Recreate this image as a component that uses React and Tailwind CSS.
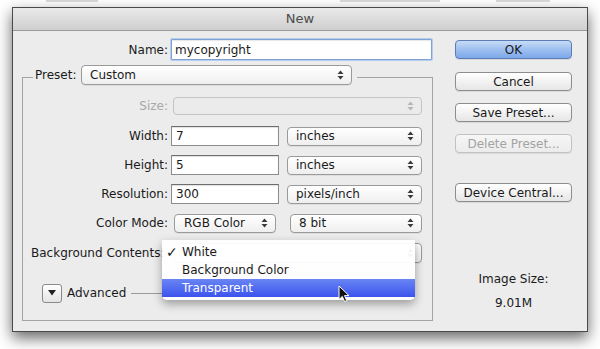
import React from "react";

const font = { fontFamily: '"DejaVu Sans", "Liberation Sans", sans-serif' };

function Arrows({ disabled }) {
  return (
    <svg width="7" height="10" viewBox="0 0 7 10" className="shrink-0">
      <polygon points="0.5,4 3.5,0.5 6.5,4" fill={disabled ? "#b5b5b5" : "#3a3a3a"} />
      <polygon points="0.5,6 3.5,9.5 6.5,6" fill={disabled ? "#b5b5b5" : "#3a3a3a"} />
    </svg>
  );
}

function Popup({ className, children, disabled, pl = "pl-[8px]" }) {
  return (
    <div
      className={`flex items-center justify-between rounded-[4px] border pr-[7px] ${pl} ${
        disabled
          ? "border-[#c4c4c4] bg-[#ebebeb]"
          : "border-[#9a9a9a] bg-linear-to-b from-white to-[#efefef] shadow-[0_1px_0_rgba(0,0,0,0.06)]"
      } ${className}`}
    >
      <span className="leading-none">{children}</span>
      <Arrows disabled={disabled} />
    </div>
  );
}

function Field({ value, className }) {
  return (
    <div
      className={`flex h-[20px] items-center border border-[#8c8c8c] border-t-[#6e6e6e] bg-white pl-[4px] shadow-[inset_0_1px_1px_rgba(0,0,0,0.12)] ${className}`}
    >
      {value}
    </div>
  );
}

function Row({ label, children, muted, className = "" }) {
  return (
    <div className={`flex h-[20px] items-center ${className}`}>
      <div className={`w-[145px] text-right ${muted ? "text-[#a8a8a8]" : ""}`}>{label}</div>
      {children}
    </div>
  );
}

function Button({ children, primary, disabled, className = "" }) {
  let look = "border-[#8d8d8d] bg-linear-to-b from-white to-[#e6e6e6] text-[#1a1a1a]";
  if (primary) look = "border-[#5a7db8] bg-linear-to-b from-[#c8dcf7] via-[#9dbff0] to-[#7ea8ea] text-[#1a1a1a]";
  if (disabled) look = "border-[#c2c2c2] bg-linear-to-b from-[#f6f6f6] to-[#ececec] text-[#a3a3a3]";
  return (
    <div
      className={`flex h-[19px] items-center justify-center rounded-[4px] border shadow-[0_1px_0_rgba(0,0,0,0.08)] ${look} ${className}`}
    >
      {children}
    </div>
  );
}

export default function App() {
  return (
    <div className="h-[349px] w-[600px] overflow-hidden bg-white text-[12px] text-[#1a1a1a]" style={font}>
      {/* bottoms of the document text behind the dialog */}
      <div className="flex h-[7px] items-start">
        <div className="ml-[46px] h-[2px] w-[52px] bg-[#d4d4d4]" />
        <div className="ml-[242px] h-[2px] w-[100px] bg-[#d4d4d4]" />
        <div className="ml-[56px] h-[2px] w-[54px] bg-[#d4d4d4]" />
      </div>

      <div className="ml-[12px] h-[325px] w-[576px] border border-[#4a4a4a] bg-[#ececec] shadow-[0_6px_14px_rgba(0,0,0,0.6)]">
        <div className="flex h-[23px] items-center justify-center border-b border-[#9b9b9b] bg-linear-to-b from-[#e9e9e9] to-[#cfcfcf] text-[13px] text-[#4b4b4b]">
          New
        </div>

        <div className="flex pl-[9px] pt-[8px]">
          {/* left column */}
          <div className="w-[411px]">
            <div className="flex h-[21px] items-center">
              <div className="w-[146px] text-right">Name:</div>
              <div className="ml-[3px] flex h-[21px] w-[261px] items-center rounded-[1px] border border-[#7fa2d6] bg-white pl-[3px] shadow-[0_0_0_1px_#b7cdee,inset_0_1px_1px_rgba(0,0,0,0.1)]">
                mycopyright
              </div>
            </div>

            <div className="mt-[17px] h-[244px] border border-[#a3a3a3]">
              <div className="-mt-[13px] flex h-[20px] items-center pl-[10px]">
                <div className="w-[48px] bg-[#ececec] pl-[2px]">Preset:</div>
                <Popup className="h-[20px] w-[271px]">Custom</Popup>
                <div className="h-[20px] w-[5px] bg-[#ececec]" />
              </div>

              <Row label="Size:" muted className="mt-[11px]">
                <Popup disabled className="ml-[5px] h-[18px] w-[249px]" />
              </Row>

              <Row label="Width:" className="mt-[10px]">
                <Field value="7" className="ml-[3px] w-[108px]" />
                <Popup className="ml-[8px] h-[19px] w-[135px]">inches</Popup>
              </Row>

              <Row label="Height:" className="mt-[9px]">
                <Field value="5" className="ml-[3px] w-[108px]" />
                <Popup className="ml-[8px] h-[19px] w-[135px]">inches</Popup>
              </Row>

              <Row label="Resolution:" className="mt-[9px]">
                <Field value="300" className="ml-[3px] w-[108px]" />
                <Popup className="ml-[8px] h-[19px] w-[135px]">pixels/inch</Popup>
              </Row>

              <Row label="Color Mode:" className="mt-[9px]">
                <Popup className="ml-[6px] h-[19px] w-[102px]" pl="pl-[9px]">RGB Color</Popup>
                <Popup className="ml-[14px] h-[19px] w-[132px]">8 bit</Popup>
              </Row>

              <div className="relative mt-[10px] flex h-[20px] items-center">
                <div className="w-[151px] pl-[8px]">Background Contents:</div>
                <Popup className="h-[20px] w-[248px]">White</Popup>

                {/* open menu */}
                <div className="absolute left-[139px] top-[-3px] w-[253px] rounded-b-[5px] bg-white/95 py-[3px] shadow-[0_4px_10px_rgba(0,0,0,0.35)]">
                  <div className="flex h-[18px] items-center">
                    <span className="w-[20px] pl-[4px] text-[14px] font-bold leading-none">✓</span>
                    <span>White</span>
                  </div>
                  <div className="flex h-[18px] items-center pl-[20px]">Background Color</div>
                  <div className="relative flex h-[18px] items-center bg-linear-to-b from-[#6a84f4] to-[#3d52ec] pl-[20px] text-white">
                    Transparent
                    <svg width="12" height="18" viewBox="0 0 12 18" className="absolute left-[176px] top-[6px]">
                      <path
                        d="M1 1 L1 14.5 L4.3 11.4 L6.6 16.6 L8.7 15.7 L6.5 10.6 L11 10.6 Z"
                        fill="#111"
                        stroke="#fff"
                        strokeWidth="1"
                        strokeLinejoin="round"
                      />
                    </svg>
                  </div>
                </div>
              </div>

              <div className="mt-[20px] flex h-[20px] items-center">
                <div className="ml-[19px] flex h-[19px] w-[20px] items-center justify-center rounded-[3px] border border-[#8a8a8a] bg-linear-to-b from-white to-[#e4e4e4]">
                  <svg width="8" height="6" viewBox="0 0 8 6">
                    <polygon points="0,0 8,0 4,5.5" fill="#222" />
                  </svg>
                </div>
                <span className="ml-[5px]">Advanced</span>
                <div className="ml-[5px] h-px w-[170px] bg-[#9c9c9c]" />
              </div>
            </div>
          </div>

          {/* right column */}
          <div className="ml-[22px] w-[117px]">
            <Button primary className="mt-[1px]">OK</Button>
            <Button className="mt-[13px]">Cancel</Button>
            <Button className="mt-[12px]">Save Preset...</Button>
            <Button disabled className="mt-[12px]">Delete Preset...</Button>
            <Button className="mt-[30px]">Device Central...</Button>
            <div className="mt-[69px] text-center leading-[16px]">Image Size:</div>
            <div className="mt-[8px] text-center leading-[16px]">9.01M</div>
          </div>
        </div>
      </div>
    </div>
  );
}
